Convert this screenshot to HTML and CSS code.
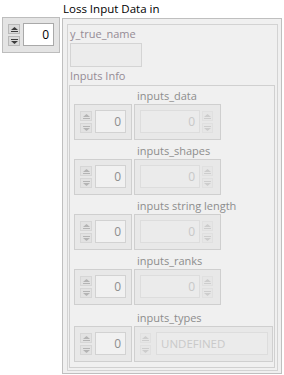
FILE: index.html
```html
<!DOCTYPE html>
<html lang="en">

<head>
  <title>Loss Input Data in</title>
  <meta charset="utf-8">
  <meta name="viewport" content="width=device-width, initial-scale=1.0">
  <link rel="stylesheet" href="styles.css">
</head>

<body>
  <div class="panel">
    <!-- array index of the outer array -->
    <div class="num index enabled top-index">
      <div class="arrows">
        <span class="arrow"><svg width="7" height="5" viewBox="0 0 7 5"><polygon points="3.5,0 7,3 0,3"/><rect x="0" y="4" width="7" height="1"/></svg></span>
        <span class="arrow"><svg width="7" height="5" viewBox="0 0 7 5"><rect x="0" y="0" width="7" height="1"/><polygon points="0,2 7,2 3.5,5"/></svg></span>
      </div>
      <div class="field">0</div>
    </div>

    <div class="cluster-wrap">
      <div class="caption">Loss Input Data in</div>
      <div class="cluster">
        <div class="frame">
          <div class="label">y_true_name</div>
          <div class="string-box"></div>
          <div class="label">Inputs Info</div>

          <div class="sub-cluster">
            <div class="item">
              <div class="item-label">inputs_data</div>
              <div class="array">
                <div class="num index">
                  <div class="arrows">
                    <span class="arrow"><svg width="7" height="5" viewBox="0 0 7 5"><polygon points="3.5,0 7,3 0,3"/><rect x="0" y="4" width="7" height="1"/></svg></span>
                    <span class="arrow"><svg width="7" height="5" viewBox="0 0 7 5"><rect x="0" y="0" width="7" height="1"/><polygon points="0,2 7,2 3.5,5"/></svg></span>
                  </div>
                  <div class="field">0</div>
                </div>
                <div class="num element">
                  <div class="field">0</div>
                  <div class="arrows">
                    <span class="arrow"><svg width="7" height="5" viewBox="0 0 7 5"><polygon points="3.5,0 7,3 0,3"/><rect x="0" y="4" width="7" height="1"/></svg></span>
                    <span class="arrow"><svg width="7" height="5" viewBox="0 0 7 5"><rect x="0" y="0" width="7" height="1"/><polygon points="0,2 7,2 3.5,5"/></svg></span>
                  </div>
                </div>
              </div>
            </div>

            <div class="item">
              <div class="item-label">inputs_shapes</div>
              <div class="array">
                <div class="num index">
                  <div class="arrows">
                    <span class="arrow"><svg width="7" height="5" viewBox="0 0 7 5"><polygon points="3.5,0 7,3 0,3"/><rect x="0" y="4" width="7" height="1"/></svg></span>
                    <span class="arrow"><svg width="7" height="5" viewBox="0 0 7 5"><rect x="0" y="0" width="7" height="1"/><polygon points="0,2 7,2 3.5,5"/></svg></span>
                  </div>
                  <div class="field">0</div>
                </div>
                <div class="num element">
                  <div class="field">0</div>
                  <div class="arrows">
                    <span class="arrow"><svg width="7" height="5" viewBox="0 0 7 5"><polygon points="3.5,0 7,3 0,3"/><rect x="0" y="4" width="7" height="1"/></svg></span>
                    <span class="arrow"><svg width="7" height="5" viewBox="0 0 7 5"><rect x="0" y="0" width="7" height="1"/><polygon points="0,2 7,2 3.5,5"/></svg></span>
                  </div>
                </div>
              </div>
            </div>

            <div class="item">
              <div class="item-label">inputs string length</div>
              <div class="array">
                <div class="num index">
                  <div class="arrows">
                    <span class="arrow"><svg width="7" height="5" viewBox="0 0 7 5"><polygon points="3.5,0 7,3 0,3"/><rect x="0" y="4" width="7" height="1"/></svg></span>
                    <span class="arrow"><svg width="7" height="5" viewBox="0 0 7 5"><rect x="0" y="0" width="7" height="1"/><polygon points="0,2 7,2 3.5,5"/></svg></span>
                  </div>
                  <div class="field">0</div>
                </div>
                <div class="num element">
                  <div class="field">0</div>
                  <div class="arrows">
                    <span class="arrow"><svg width="7" height="5" viewBox="0 0 7 5"><polygon points="3.5,0 7,3 0,3"/><rect x="0" y="4" width="7" height="1"/></svg></span>
                    <span class="arrow"><svg width="7" height="5" viewBox="0 0 7 5"><rect x="0" y="0" width="7" height="1"/><polygon points="0,2 7,2 3.5,5"/></svg></span>
                  </div>
                </div>
              </div>
            </div>

            <div class="item">
              <div class="item-label">inputs_ranks</div>
              <div class="array">
                <div class="num index">
                  <div class="arrows">
                    <span class="arrow"><svg width="7" height="5" viewBox="0 0 7 5"><polygon points="3.5,0 7,3 0,3"/><rect x="0" y="4" width="7" height="1"/></svg></span>
                    <span class="arrow"><svg width="7" height="5" viewBox="0 0 7 5"><rect x="0" y="0" width="7" height="1"/><polygon points="0,2 7,2 3.5,5"/></svg></span>
                  </div>
                  <div class="field">0</div>
                </div>
                <div class="num element">
                  <div class="field">0</div>
                  <div class="arrows">
                    <span class="arrow"><svg width="7" height="5" viewBox="0 0 7 5"><polygon points="3.5,0 7,3 0,3"/><rect x="0" y="4" width="7" height="1"/></svg></span>
                    <span class="arrow"><svg width="7" height="5" viewBox="0 0 7 5"><rect x="0" y="0" width="7" height="1"/><polygon points="0,2 7,2 3.5,5"/></svg></span>
                  </div>
                </div>
              </div>
            </div>

            <div class="item last">
              <div class="item-label">inputs_types</div>
              <div class="array">
                <div class="num index">
                  <div class="arrows">
                    <span class="arrow"><svg width="7" height="5" viewBox="0 0 7 5"><polygon points="3.5,0 7,3 0,3"/><rect x="0" y="4" width="7" height="1"/></svg></span>
                    <span class="arrow"><svg width="7" height="5" viewBox="0 0 7 5"><rect x="0" y="0" width="7" height="1"/><polygon points="0,2 7,2 3.5,5"/></svg></span>
                  </div>
                  <div class="field">0</div>
                </div>
                <div class="num ring">
                  <div class="arrows">
                    <span class="arrow"><svg width="7" height="5" viewBox="0 0 7 5"><polygon points="3.5,0 7,3 0,3"/><rect x="0" y="4" width="7" height="1"/></svg></span>
                    <span class="arrow"><svg width="7" height="5" viewBox="0 0 7 5"><rect x="0" y="0" width="7" height="1"/><polygon points="0,2 7,2 3.5,5"/></svg></span>
                  </div>
                  <div class="field">UNDEFINED</div>
                </div>
              </div>
            </div>
          </div>
        </div>
      </div>
    </div>
  </div>
</body>

</html>
```

FILE: styles.css
```css
* {
  box-sizing: border-box;
}

body {
  margin: 0;
  background-color: #ffffff;
  font-family: "Open Sans", "Noto Sans", sans-serif;
  font-size: 11px;
}

.panel {
  display: flex;
  align-items: flex-start;
  padding-left: 2px;
}

.top-index {
  margin-top: 17px;
}

.cluster-wrap {
  margin-left: 2px;
}

.caption {
  height: 18px;
  line-height: 17px;
  padding-left: 1px;
  font-size: 11.5px;
  color: #000000;
}

/* outer cluster with its double frame */
.cluster {
  width: 220px;
  border: 1px solid #bfbfbf;
  background-color: #f0f0f0;
  padding: 5px 3px 2px 4px;
}

.frame {
  border: 1px solid #d3d3d3;
  padding: 1px 2px 2px 1px;
}

.label {
  height: 16px;
  line-height: 15px;
  margin-left: 1px;
  color: #958b95;
}

.string-box {
  width: 72px;
  height: 24px;
  margin: 1px 0 1px 1px;
  border: 1px solid #d4d4d4;
  background-color: #ececec;
}

.sub-cluster {
  width: 206px;
  margin-top: 1px;
  border: 1px solid #d0d0d0;
  padding: 2px 1px 5px 4px;
}

.item + .item {
  margin-top: 3px;
}

.item.last {
  margin-top: 5px;
}

.item-label {
  height: 16px;
  line-height: 15px;
  margin-left: 63px;
  color: #8d8d8d;
}

.array {
  display: flex;
  gap: 2px;
}

/* numeric controls */
.num {
  display: flex;
  height: 36px;
  padding: 5px;
  border: 1px solid #cfcfcf;
  background-color: #e8e8e8;
}

.arrows {
  display: flex;
  flex-direction: column;
  gap: 2px;
  padding-top: 1px;
}

.arrow {
  display: flex;
  align-items: center;
  justify-content: center;
  width: 12px;
  height: 10px;
  border: 1px solid #d6d6d6;
  background-color: #e2e2e2;
  fill: #b4b4b4;
}

.field {
  height: 23px;
  line-height: 21px;
  padding-right: 4px;
  border: 1px solid #d2d2d2;
  background-color: #f1f1f1;
  text-align: right;
  font-size: 12px;
  color: #8e8e8e;
}

.index {
  width: 58px;
}

.index .field {
  width: 31px;
  margin-left: 3px;
}

.element {
  width: 87px;
  padding-right: 6px;
}

.element .field {
  width: 60px;
  margin-right: 2px;
  border-color: #dddddd;
  background-color: #ebebeb;
  color: #c8c8c8;
}

.element .arrow,
.ring .arrow {
  width: 11px;
  border-color: #e0e0e0;
  background-color: #e6e6e6;
  fill: #cdcdcd;
}

.ring {
  width: 139px;
  padding-right: 4px;
}

.ring .field {
  width: 112px;
  margin-left: 5px;
  padding-left: 4px;
  border-color: #dddddd;
  background-color: #ebebeb;
  text-align: left;
  font-size: 11.5px;
  color: #c9c9c9;
}

/* the one live control */
.enabled {
  border-color: #bdbdbd;
  background-color: #e4e4e4;
}

.enabled .arrow {
  border-color: #b8b8b8;
  background-color: #dadada;
  fill: #3c3c3c;
}

.enabled .field {
  border-color: #a9a9a9;
  background-color: #ffffff;
  color: #000000;
}
```
